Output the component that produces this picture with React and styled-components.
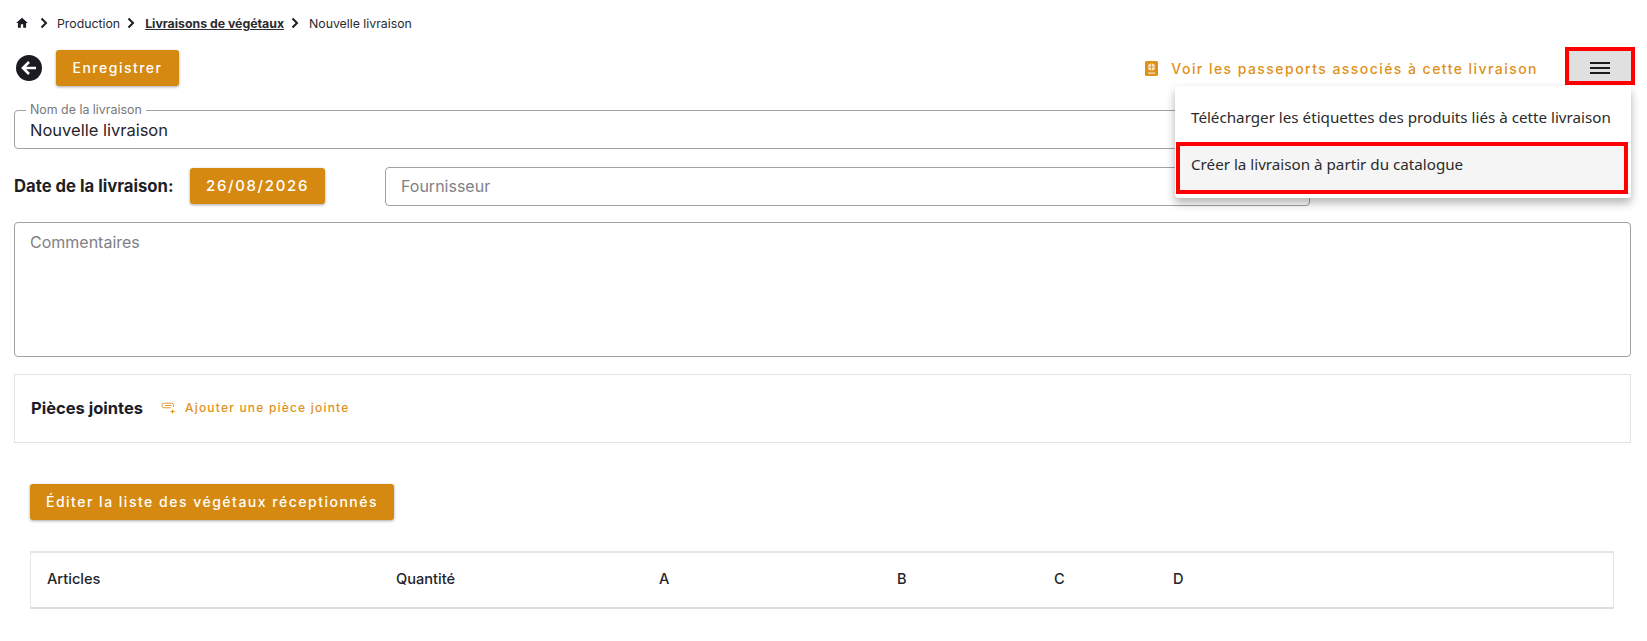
import React from "react";
import styled, { createGlobalStyle } from "styled-components";

const GlobalStyle = createGlobalStyle`
  html, body { margin: 0; padding: 0; background: #fff; }
  body { font-family: Inter, "Liberation Sans", sans-serif; color: #1c1c22; }
  * { box-sizing: border-box; }
`;

const Page = styled.div`
  position: relative;
  height: 641px;
  overflow: hidden;
  padding: 15px 16px 0 14px;
`;

const Crumbs = styled.nav`
  display: flex;
  align-items: center;
  height: 16px;
  font-size: 12.3px;
  color: #2a2a30;
  padding-left: 1px;
`;

const Crumb = styled.span`
  font-weight: ${(p) => (p.$active ? 700 : 400)};
  text-decoration: ${(p) => (p.$active ? "underline" : "none")};
  margin-left: ${(p) => p.$gap || 0}px;
`;

const Chevron = styled.svg`
  width: 12px;
  height: 12px;
  margin-left: ${(p) => p.$gap || 0}px;
  fill: none;
  stroke: #1c1c22;
  stroke-width: 2;
`;

const Toolbar = styled.div`
  display: flex;
  align-items: center;
  height: 42px;
  margin-top: 16px;
  padding-left: 2px;
`;

const BackIcon = styled.svg`
  width: 26px;
  height: 26px;
  margin-right: 14px;
  flex: none;
`;

const Button = styled.button`
  display: inline-flex;
  align-items: center;
  justify-content: center;
  height: 36px;
  width: ${(p) => p.$width}px;
  border: none;
  border-radius: 3px;
  padding: 0 0 2px;
  background: #d68910;
  color: #fff;
  font-family: Inter, sans-serif;
  font-size: ${(p) => (p.$date ? 15 : 14)}px;
  font-weight: 500;
  letter-spacing: ${(p) => (p.$date ? 1.65 : 1.5)}px;
  box-shadow: 0 1px 3px rgba(0, 0, 0, 0.35);
`;

const PassportLink = styled.a`
  display: flex;
  align-items: center;
  gap: 13px;
  margin-left: auto;
  margin-right: 27px;
  color: #e0911a;
  font-size: 14px;
  font-weight: 500;
  letter-spacing: 1.45px;
`;

const MenuToggle = styled.button`
  align-self: flex-start;
  width: 70px;
  height: 38px;
  border: 4px solid #f00;
  background: #e0e0e0;
  padding: 4px 0 0;
  margin-right: -4px;
  display: flex;
  align-items: center;
  justify-content: center;
`;

const Dropdown = styled.div`
  position: absolute;
  top: 86px;
  left: 1175px;
  width: 456px;
  height: 112px;
  background: #fff;
  border-radius: 4px;
  box-shadow: 0 5px 10px rgba(0, 0, 0, 0.3);
  display: flex;
  flex-direction: column;
  z-index: 5;
`;

const MenuItem = styled.div`
  display: flex;
  align-items: center;
  height: ${(p) => (p.$picked ? 52 : 56)}px;
  margin-left: ${(p) => (p.$picked ? 1 : 0)}px;
  margin-right: ${(p) => (p.$picked ? 3 : 0)}px;
  padding-left: ${(p) => (p.$picked ? 11 : 16)}px;
  padding-top: ${(p) => (p.$picked ? 0 : 5)}px;
  padding-bottom: ${(p) => (p.$picked ? 8 : 0)}px;
  border: ${(p) => (p.$picked ? "4px solid #f00" : "none")};
  background: ${(p) => (p.$picked ? "#f5f5f5" : "#fff")};
  font-family: "Noto Sans", sans-serif;
  font-size: 15.2px;
  color: #2b2b2b;
  white-space: nowrap;
`;

const NameField = styled.fieldset`
  height: 45px;
  margin: 15px 0 0;
  padding: 0 0 0 11px;
  border: 1px solid #a0a0a0;
  border-radius: 4px;
  min-width: 0;
`;

const NameLegend = styled.legend`
  font-size: 12.4px;
  line-height: 12px;
  color: #77777c;
  padding: 0 4px;
`;

const NameValue = styled.div`
  font-size: 16.5px;
  line-height: 20px;
  margin: 4px 0 0 4px;
  color: #26262c;
`;

const DateRow = styled.div`
  display: flex;
  align-items: center;
  height: 40px;
  margin-top: 17px;
`;

const DateLabel = styled.label`
  width: 176px;
  font-size: 16.7px;
  font-weight: 700;
  color: #1f1f26;
`;

const SupplierBox = styled.div`
  width: 925px;
  height: 39px;
  margin-left: 60px;
  display: flex;
  align-items: center;
  padding-left: 15px;
  border: 1px solid #a0a0a0;
  border-radius: 4px;
  font-size: 16px;
  color: #808086;
`;

const CommentBox = styled.div`
  height: 135px;
  margin-top: 16px;
  padding: 9px 15px;
  border: 1px solid #a0a0a0;
  border-radius: 4px;
  font-size: 16px;
  line-height: 20px;
  color: #808086;
`;

const Attachments = styled.section`
  display: flex;
  align-items: center;
  height: 69px;
  margin-top: 17px;
  padding: 0 0 2px 16px;
  border: 1px solid #e0e0e8;
`;

const SectionTitle = styled.h2`
  margin: 0 18px 0 0;
  font-size: 16.5px;
  font-weight: 700;
  color: #1c1c28;
`;

const AddLink = styled.a`
  display: flex;
  align-items: center;
  gap: 9px;
  font-size: 12px;
  font-weight: 500;
  letter-spacing: 1.2px;
  color: #e0911a;
`;

const ListAction = styled.div`
  margin-top: 41px;
  padding-left: 16px;
`;

const TableHead = styled.div`
  display: grid;
  grid-template-columns: 349px 263px 238px 157px 119px 1fr;
  align-items: center;
  height: 58px;
  margin: 31px 17px 0 16px;
  padding: 0 0 2px 16px;
  border: 1px solid #e4e4ea;
  border-top-width: 2px;
  border-bottom: 2px solid #dedee2;
  font-size: 14.6px;
  font-weight: 500;
  color: #24242c;
`;

const columns = ["Articles", "Quantité", "A", "B", "C", "D"];

const ChevronIcon = ({ gap }) => (
  <Chevron $gap={gap} viewBox="0 0 12 12">
    <path d="M3.5 1.5 8 6l-4.5 4.5" />
  </Chevron>
);

export default function App() {
  return (
    <>
      <GlobalStyle />
      <Page>
        <Crumbs>
          <svg width="14" height="14" viewBox="0 0 24 24" fill="#1c1c22">
            <path d="M10 20v-6h4v6h5v-8h3L12 3 2 12h3v8z" />
          </svg>
          <ChevronIcon gap={9} />
          <Crumb $gap={7}>Production</Crumb>
          <ChevronIcon gap={5} />
          <Crumb $active $gap={8}>Livraisons de végétaux</Crumb>
          <ChevronIcon gap={5} />
          <Crumb $gap={8}>Nouvelle livraison</Crumb>
        </Crumbs>

        <Toolbar>
          <BackIcon viewBox="0 0 26 26">
            <circle cx="13" cy="13" r="13" fill="#1b1b22" />
            <path d="M20 13H7.5M13 7l-6 6 6 6" fill="none" stroke="#fff" strokeWidth="2.6" />
          </BackIcon>
          <Button $width={123}>Enregistrer</Button>
          <PassportLink>
            <svg width="13" height="15" viewBox="0 0 13 15">
              <rect width="13" height="15" rx="1.5" fill="#e0911a" />
              <circle cx="6.5" cy="6" r="3.6" fill="#fbe6c4" />
              <path d="M3 6h7M6.5 2.5v7" stroke="#e0911a" strokeWidth="0.8" />
              <rect x="3" y="11.5" width="7" height="1.2" fill="#fbe6c4" />
            </svg>
            Voir les passeports associés à cette livraison
          </PassportLink>
          <MenuToggle aria-label="Menu">
            <svg width="20" height="12" viewBox="0 0 20 12" fill="#1b1b22">
              <rect y="0" width="20" height="2" />
              <rect y="5" width="20" height="2" />
              <rect y="10" width="20" height="2" />
            </svg>
          </MenuToggle>
        </Toolbar>

        <Dropdown>
          <MenuItem>Télécharger les étiquettes des produits liés à cette livraison</MenuItem>
          <MenuItem $picked>Créer la livraison à partir du catalogue</MenuItem>
        </Dropdown>

        <NameField>
          <NameLegend>Nom de la livraison</NameLegend>
          <NameValue>Nouvelle livraison</NameValue>
        </NameField>

        <DateRow>
          <DateLabel>Date de la livraison:</DateLabel>
          <Button $date $width={135}>26/08/2026</Button>
          <SupplierBox>Fournisseur</SupplierBox>
        </DateRow>

        <CommentBox>Commentaires</CommentBox>

        <Attachments>
          <SectionTitle>Pièces jointes</SectionTitle>
          <AddLink>
            <svg width="15" height="12" viewBox="0 0 15 12" fill="none" stroke="#e0911a" strokeWidth="0.9">
              <path d="M12.5 5V3.2a2 2 0 0 0-2-2H3.2a2.3 2.3 0 0 0 0 4.6H10" />
              <path d="M10.5 3.5H4" />
              <path d="M11.5 7.5v4M9.5 9.5h4" strokeWidth="1.1" />
            </svg>
            Ajouter une pièce jointe
          </AddLink>
        </Attachments>

        <ListAction>
          <Button $width={364}>Éditer la liste des végétaux réceptionnés</Button>
        </ListAction>

        <TableHead>
          {columns.map((name) => (
            <span key={name}>{name}</span>
          ))}
        </TableHead>
      </Page>
    </>
  );
}
